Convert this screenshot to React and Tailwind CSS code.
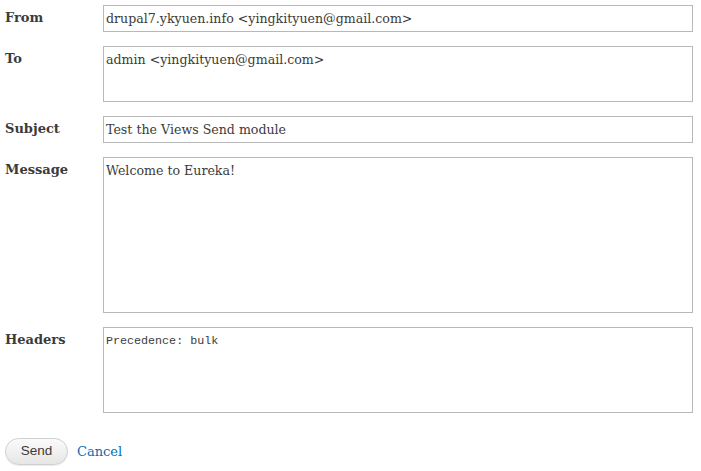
export default function App() {
    const rows = [
        { label: 'From', value: 'drupal7.ykyuen.info <yingkityuen@gmail.com>', h: 'h-[27px]' },
        { label: 'To', value: 'admin <yingkityuen@gmail.com>', h: 'h-[56px]' },
        { label: 'Subject', value: 'Test the Views Send module', h: 'h-[27px]' },
        { label: 'Message', value: 'Welcome to Eureka!', h: 'h-[156px]' },
    ];

    return (
        <div className="min-h-screen bg-white pl-[5px] pt-[5px] text-[#3b3b3b] font-['DejaVu_Serif',serif]">
            <div className="flex flex-col gap-[14px] w-[688px]">
                {rows.map((row) => (
                    <div key={row.label} className="flex">
                        <div className="w-[98px] pt-[3px] text-[13px] font-bold">{row.label}</div>
                        <div className={`flex-1 ${row.h} border border-[#b8b8b8] px-[2px] pt-[5px] text-[12.6px] leading-[16px]`}>
                            {row.value}
                        </div>
                    </div>
                ))}
                <div className="flex">
                    <div className="w-[98px] pt-[3px] text-[13px] font-bold">Headers</div>
                    <div className="flex-1 h-[86px] border border-[#b8b8b8] px-[2px] pt-[6px] text-[11.7px] leading-[14px] font-['Liberation_Mono',monospace]">
                        Precedence: bulk
                    </div>
                </div>
            </div>
            <div className="flex items-center gap-[9px] mt-[25px]">
                <button className="w-[63px] h-[27px] rounded-full border border-[#cfcfcf] bg-gradient-to-b from-[#fbfbfb] to-[#e6e6e6] text-[13.5px] text-[#3a3a3a] font-['Liberation_Sans',sans-serif] shadow-[0_1px_1px_rgba(0,0,0,0.08)]">
                    Send
                </button>
                <a href="#" className="text-[13px] text-[#0071b3]">Cancel</a>
            </div>
        </div>
    );
}
